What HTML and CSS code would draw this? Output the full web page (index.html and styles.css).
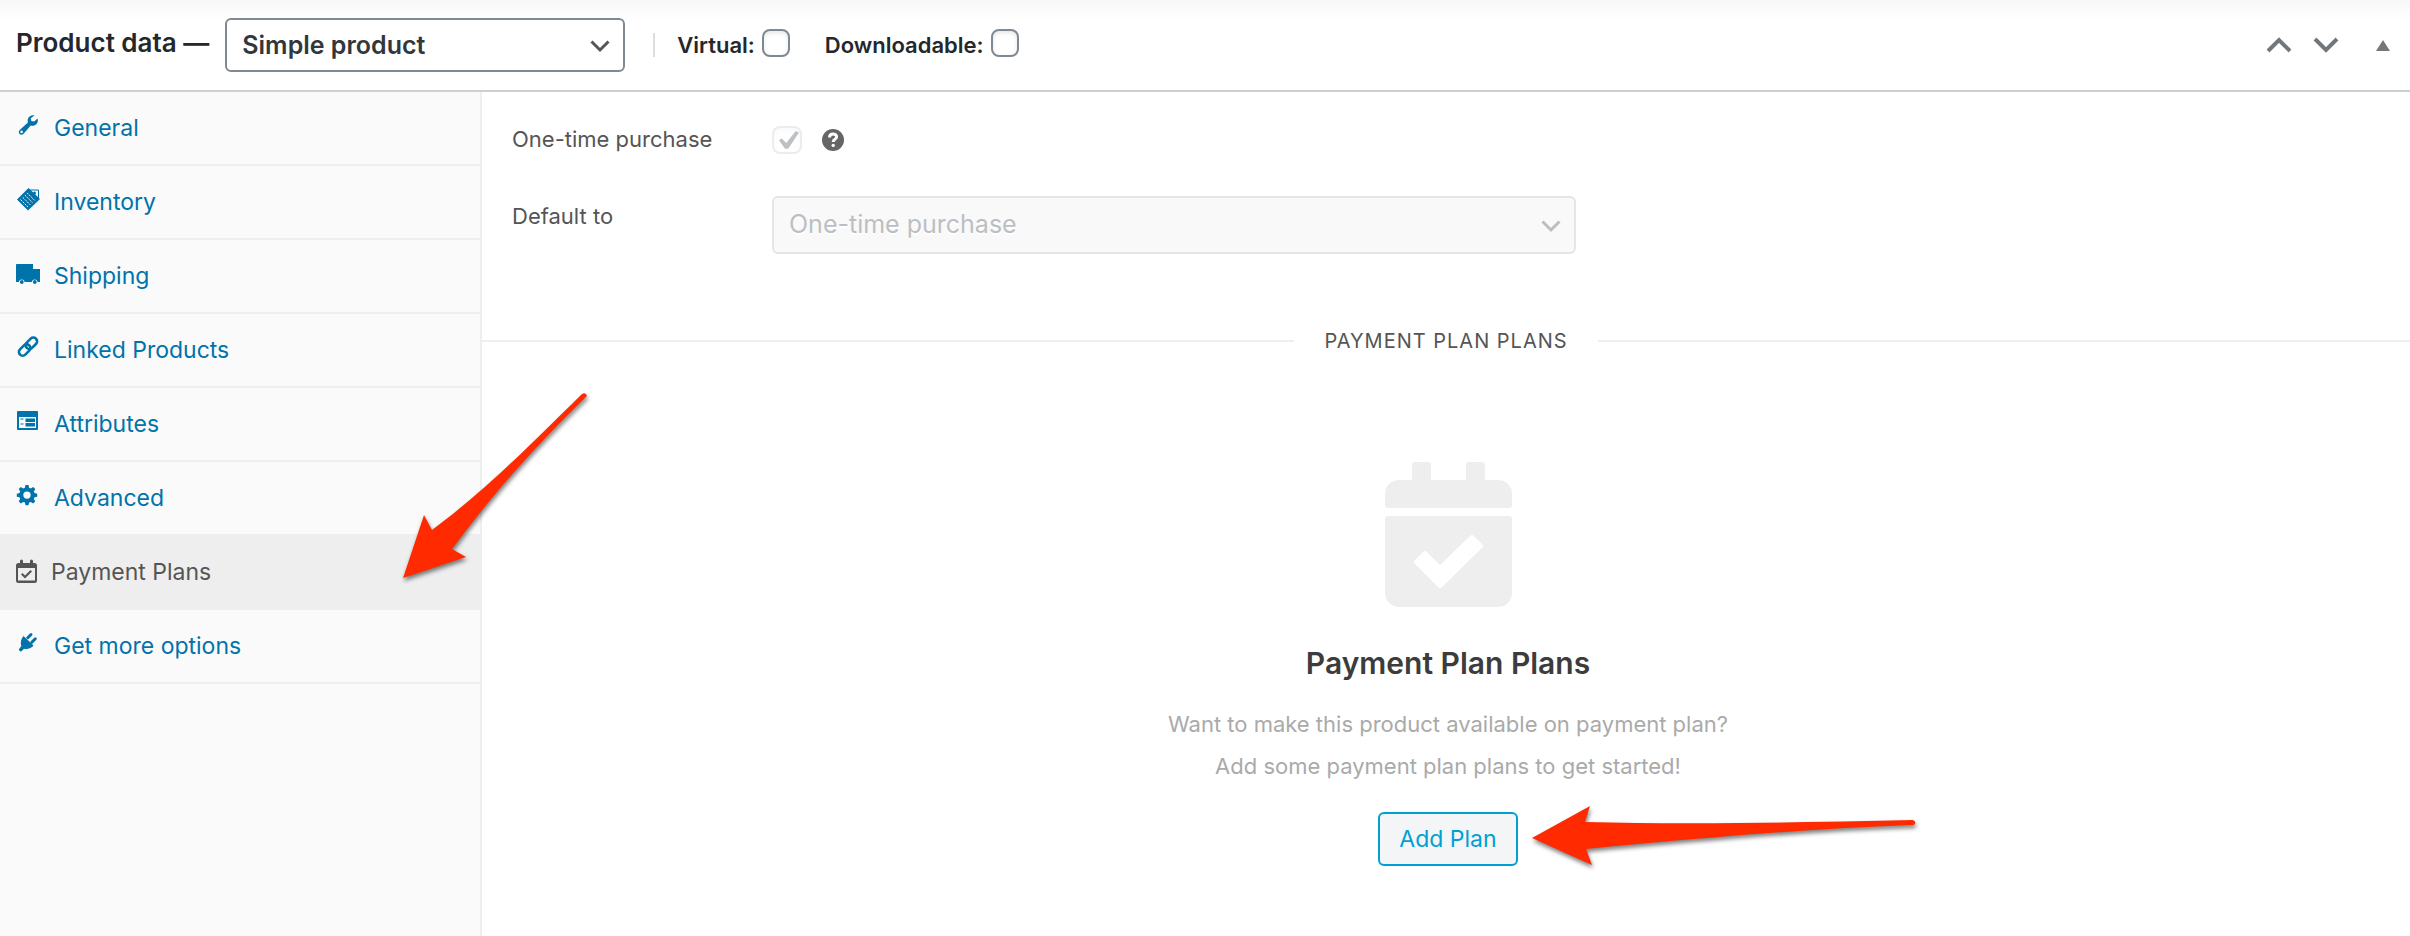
FILE: index.html
```html
<!DOCTYPE html>
<html lang="en">
<head>
    <meta charset="UTF-8">
    <meta name="viewport" content="width=device-width, initial-scale=1.0">
    <title>Product data</title>
    <link rel="stylesheet" href="styles.css">
</head>
<body>
    <div class="postbox">
        <header class="postbox-header">
            <label class="postbox-title" for="product-type">Product data —</label>
            <div class="select-wrap type-select">
                <select id="product-type" name="product-type">
                    <option selected>Simple product</option>
                </select>
                <svg class="chevron" viewBox="0 0 20 20"><path d="M1.500 5.500L10 14l8.500-8.500"/></svg>
            </div>
            <div class="type-options">
                <label for="virtual">Virtual:</label>
                <input type="checkbox" id="virtual" name="virtual">
                <label class="next" for="downloadable">Downloadable:</label>
                <input type="checkbox" id="downloadable" name="downloadable">
            </div>
            <div class="handle-actions">
                <button type="button" aria-label="Move up"><svg width="26" height="16" viewBox="0 0 26 16"><path class="stroke" d="M2 14L13 3l11 11"/></svg></button>
                <button type="button" aria-label="Move down"><svg width="26" height="16" viewBox="0 0 26 16"><path class="stroke" d="M2 2l11 11L24 2"/></svg></button>
                <button type="button" class="toggle" aria-label="Toggle panel"><svg width="14" height="11" viewBox="0 0 14 11"><path d="M7 0l7 11H0z"/></svg></button>
            </div>
        </header>

        <div class="panel-wrap">
            <nav class="tabs">
                <ul>
                    <li><a href="#general">
                        <svg class="icon" viewBox="0 0 24 24"><path fill-rule="evenodd" d="M18.500 2.500c-3-.7-6.300 1-6.800 4.200-.2 1.100 0 2 .2 2.800l-7.900 7.200c-1.500 1.300-1.500 3.100-.4 4.200s3 1.100 4.200-.4l7-7.900c3.400.9 6.800-1.400 7-4.600.1-.9 0-1.800-.3-2.600l-3.300 3.200-2.900-.5-.6-2.800zM5.600 17.600a1.300 1.300 0 1 1 0 2.600 1.300 1.300 0 0 1 0-2.600z"/></svg>
                        General</a></li>
                    <li><a href="#inventory">
                        <svg class="icon" viewBox="0 0 24 24"><path d="M12.500 1L24 12 12 23.500 1 12.500z"/><path class="cut" d="M4.500 12.500l7.500 7.500M6.700 10.300l7.500 7.500M8.900 8.100l7.500 7.500M11.100 5.900l7.500 7.500"/><path class="line" d="M14 3h8.500v8"/><circle cx="18.500" cy="6" r="1.500"/></svg>
                        Inventory</a></li>
                    <li><a href="#shipping">
                        <svg class="icon" viewBox="0 0 24 24"><path d="M1 3h16v5h7v13h-2.300a3 3 0 0 0-5.900 0H8.700a3 3 0 0 0-5.900 0H0V4c0-.6.400-1 1-1z"/><circle cx="5.800" cy="21" r="1.900"/><circle cx="18.800" cy="21" r="1.900"/></svg>
                        Shipping</a></li>
                    <li><a href="#linked">
                        <svg class="icon" viewBox="0 0 24 24"><g class="link" transform="rotate(-45 12 12)"><rect x="1" y="8" width="13" height="7.500" rx="3.700"/><rect x="10.500" y="8" width="13" height="7.500" rx="3.700"/></g></svg>
                        Linked Products</a></li>
                    <li><a href="#attributes">
                        <svg class="icon" viewBox="0 0 24 24"><path fill-rule="evenodd" d="M2 2h19a1 1 0 0 1 1 1v17a1 1 0 0 1-1 1H2a1 1 0 0 1-1-1V3a1 1 0 0 1 1-1zm1 6v11h17V8zm1.500 1.500h3v1h-3zm5 0H19V13H9.500zm-5 5h3v1h-3zm5-.5H19v3.500H9.500z"/></svg>
                        Attributes</a></li>
                    <li><a href="#advanced">
                        <svg class="icon" viewBox="0 0 24 24"><path fill-rule="evenodd" d="M9.500 2h3l.6 2.700 1.700.7L17.200 4l2.100 2.100-1.500 2.300.7 1.700 2.700.6v3l-2.700.6-.7 1.700 1.500 2.300-2.100 2.100-2.400-1.500-1.700.7-.6 2.700h-3l-.6-2.700-1.700-.7-2.400 1.500-2.100-2.100L4.200 16l-.7-1.700-2.700-.6v-3l2.700-.6.7-1.700-1.500-2.300L4.800 4l2.400 1.400 1.700-.7zM11 8.400a3.700 3.700 0 1 0 0 7.400 3.700 3.700 0 0 0 0-7.400z"/></svg>
                        Advanced</a></li>
                    <li class="active"><a href="#payment-plans">
                        <svg class="icon" viewBox="0 0 24 24"><path fill-rule="evenodd" d="M4 3V1a1 1 0 0 1 3 0v2h7V1a1 1 0 0 1 3 0v2h1.500A2.500 2.500 0 0 1 21 5.500v15a2.500 2.500 0 0 1-2.500 2.500h-16A2.500 2.500 0 0 1 0 20.500v-15A2.500 2.500 0 0 1 2.500 3zM2 8v12.500h17V8z"/><path d="M5 14.500l1.500-1.500 2.500 2.500 5.500-5.500 1.500 1.500-7 7z"/></svg>
                        Payment Plans</a>
                        <svg class="arrow arrow-tab" width="190" height="192" viewBox="0 0 190 192"><path d="M2 188L23 125l8 15C86 99 128 56 181 4q4-2 5 2C129 62 92 104 51 159l14 8z"/></svg>
                    </li>
                    <li><a href="#more">
                        <svg class="icon" viewBox="0 0 24 24"><path d="M7.500 5l10 9.500c-2 2.800-6 4-9.500 3.200l-2 2a1.700 1.700 0 0 1-2.600-2.300l1.900-2.200C4.200 11.500 5 7.500 7.500 5z"/><path class="prong" d="M11.800 6.700l3.200-3.200M15.800 11.300L19.300 7.800"/></svg>
                        Get more options</a></li>
                </ul>
            </nav>

            <main class="panel">
                <form class="options">
                    <div class="field">
                        <label for="one-time">One-time purchase</label>
                        <input type="checkbox" class="wide" id="one-time" name="one-time" checked disabled>
                        <svg class="help" width="22" height="22" viewBox="0 0 22 22"><circle cx="11" cy="11" r="11"/><path class="mark" d="M7.500 8.500C7.500 3.800 14.800 4 14.600 8c-.1 2.500-3.400 2.200-3.400 5"/><circle class="dot" cx="11.200" cy="16.400" r="1.700"/></svg>
                    </div>
                    <div class="field field-select">
                        <label for="default-to">Default to</label>
                        <div class="select-wrap default-select">
                            <select id="default-to" name="default-to" disabled>
                                <option selected>One-time purchase</option>
                            </select>
                            <svg class="chevron" viewBox="0 0 20 20"><path d="M1.500 5.500L10 14l8.500-8.500"/></svg>
                        </div>
                    </div>
                </form>

                <div class="separator">Payment Plan Plans</div>

                <section class="empty">
                    <svg class="calendar" width="127" height="145" viewBox="0 0 127 145"><path d="M27 18V3a3 3 0 0 1 3-3h13a3 3 0 0 1 3 3v15h35V3a3 3 0 0 1 3-3h13a3 3 0 0 1 3 3v15h13a14 14 0 0 1 14 14v11a3 3 0 0 1-3 3H3a3 3 0 0 1-3-3V32a14 14 0 0 1 14-14z"/><path fill-rule="evenodd" d="M3 54h121a3 3 0 0 1 3 3v74a14 14 0 0 1-14 14H14a14 14 0 0 1-14-14V57a3 3 0 0 1 3-3zM55 103L42 90q-2-2-4 0l-8 8q-2 2 0 4l23 23q2 2 4 0l40-39q2-2 0-4l-8-8q-2-2-4 0z"/></svg>
                    <h2>Payment Plan Plans</h2>
                    <p>Want to make this product available on payment plan?<br>Add some payment plan plans to get started!</p>
                    <div class="add-wrap">
                        <button type="button" class="add-button">Add Plan</button>
                        <svg class="arrow arrow-button" width="390" height="68" viewBox="0 0 390 68"><path d="M2 34L60 2l-5 16C170 21 280 18 383 16q4 2 1 5C270 25 160 35 56 45l6 16z"/></svg>
                    </div>
                </section>
            </main>
        </div>
    </div>
</body>
</html>
```
FILE: styles.css
```css
* {
    box-sizing: border-box;
}
body {
    margin: 0;
    font-family: Inter, "Liberation Sans", sans-serif;
    font-size: 22px;
    color: #555;
    background-color: #fff;
}
.postbox {
    display: flex;
    flex-direction: column;
    min-height: 100vh;
}
.postbox-header {
    display: flex;
    align-items: center;
    height: 92px;
    padding: 0 20px 0 16px;
    border-bottom: 2px solid #ccd0d4;
    background: linear-gradient(#f8f8f8, #fff 20px);
    color: #23282d;
    font-weight: 600;
}
.postbox-title {
    font-size: 26px;
    padding-bottom: 6px;
    margin-right: 16px;
    white-space: nowrap;
}

/* form controls */
.select-wrap {
    position: relative;
}
select {
    appearance: none;
    width: 100%;
    height: 100%;
    padding: 0 48px 0 15px;
    border: 2px solid #7e8993;
    border-radius: 6px;
    background-color: #fff;
    color: #32373c;
    font: inherit;
    font-size: 25px;
}
select:disabled {
    padding-bottom: 3px;
    border-color: #e5e5e5;
    background-color: #f9f9f9;
    color: #bbbfc3;
    text-shadow: 0 2px 0 #fff;
    opacity: 1;
}
.chevron {
    position: absolute;
    top: 50%;
    right: 15px;
    width: 20px;
    height: 20px;
    margin-top: -9px;
    fill: none;
    stroke: #555;
    stroke-width: 3;
    pointer-events: none;
}
.type-select {
    width: 400px;
    height: 54px;
}
.default-select {
    width: 804px;
    height: 58px;
}
.default-select .chevron {
    stroke: #bbbfc3;
}
input[type="checkbox"] {
    appearance: none;
    flex: none;
    width: 28px;
    height: 28px;
    margin: 0;
    border: 2px solid #7e8993;
    border-radius: 8px;
    background-color: #fff;
    box-shadow: inset 0 2px 4px rgba(0, 0, 0, 0.1);
}
input[type="checkbox"].wide {
    width: 30px;
    border-color: #ececec;
    box-shadow: inset 0 2px 4px rgba(0, 0, 0, 0.03);
}
input:checked::before {
    content: "";
    display: block;
    width: 20px;
    height: 18px;
    margin: 3px 0 0 5px;
    background-color: #bcc1c6;
    clip-path: polygon(0 52%, 14% 42%, 36% 66%, 84% 0, 100% 8%, 46% 98%, 30% 98%);
}

/* header */
.type-options {
    display: flex;
    align-items: center;
    gap: 7px;
    height: 24px;
    margin-left: 28px;
    padding-left: 22px;
    border-left: 2px solid #ddd;
    font-size: 22px;
}
.type-options input {
    margin-bottom: 4px;
}
.type-options .next {
    margin-left: 28px;
}
.handle-actions {
    display: flex;
    align-items: center;
    gap: 21px;
    margin-left: auto;
}
.handle-actions button {
    display: flex;
    padding: 0;
    border: none;
    background: none;
    fill: #72777c;
    cursor: pointer;
}
.handle-actions .toggle {
    margin-left: 16px;
}
.handle-actions .stroke {
    fill: none;
    stroke: #72777c;
    stroke-width: 4;
}

/* tabs */
.panel-wrap {
    display: flex;
    flex: 1;
}
.tabs {
    flex: none;
    width: 482px;
    border-right: 2px solid #eee;
    background-color: #fafafa;
}
.tabs ul {
    margin: 0;
    padding: 0;
    list-style: none;
}
.tabs li {
    position: relative;
}
.tabs a {
    display: flex;
    align-items: center;
    gap: 14px;
    height: 74px;
    padding: 0 16px;
    border-bottom: 2px solid #eee;
    color: #0073aa;
    font-size: 23px;
    text-decoration: none;
}
.tabs .active a {
    gap: 11px;
    margin-right: -2px;
    background-color: #eee;
    color: #555;
}
.icon {
    width: 24px;
    height: 24px;
    margin-bottom: 6px;
    fill: currentColor;
    overflow: visible;
}
.active .icon {
    margin-bottom: 0;
}
.icon .line,
.icon .link,
.icon .cut,
.icon .prong {
    fill: none;
    stroke: currentColor;
}
.icon .line {
    stroke-width: 1;
}
.icon .cut {
    stroke: #fafafa;
    stroke-width: 1;
    stroke-dasharray: 2 1;
}
.icon .link {
    stroke-width: 2.600;
}
.icon .prong {
    stroke-width: 3;
    stroke-linecap: round;
}

/* panel */
.panel {
    flex: 1;
    min-width: 0;
}
.options {
    display: flex;
    flex-direction: column;
    gap: 42px;
    padding: 34px 30px 74px;
}
.field {
    display: flex;
    align-items: center;
}
.field label {
    flex: none;
    width: 260px;
    padding-bottom: 2px;
}
.field-select {
    align-items: flex-start;
}
.field-select label {
    padding-top: 7px;
}
.help {
    margin-left: 20px;
    fill: #666;
}
.help .mark {
    fill: none;
    stroke: #fff;
    stroke-width: 3;
}
.help .dot {
    fill: #fff;
}
.separator {
    display: flex;
    align-items: center;
    gap: 30px;
    height: 26px;
    font-size: 20px;
    letter-spacing: 1px;
    text-transform: uppercase;
}
.separator::before,
.separator::after {
    content: "";
    flex: 1;
    height: 2px;
    background-color: #eee;
}
.empty {
    display: flex;
    flex-direction: column;
    align-items: center;
    padding: 108px 0 0 4px;
    text-align: center;
}
.calendar {
    fill: #eee;
}
.empty h2 {
    margin: 36px 0 0;
    color: #3c3c3c;
    font-size: 30px;
    font-weight: 600;
    line-height: 40px;
}
.empty p {
    margin: 20px 0 25px;
    color: #aaa;
    line-height: 42px;
}
.add-wrap {
    position: relative;
}
.add-button {
    height: 54px;
    padding: 0 19px;
    border: 2px solid #00a0d2;
    border-radius: 6px;
    background-color: #f3f5f6;
    color: #00a0d2;
    font: inherit;
    font-size: 23px;
    cursor: pointer;
}

/* pointers drawn over the panel */
.arrow {
    position: absolute;
    z-index: 1;
    fill: #ff2a00;
    overflow: visible;
    pointer-events: none;
    filter: drop-shadow(1px 3px 2px rgba(0, 0, 0, 0.5));
}
.arrow-tab {
    left: 401px;
    bottom: 28px;
}
.arrow-button {
    left: 152px;
    top: -8px;
}
```
